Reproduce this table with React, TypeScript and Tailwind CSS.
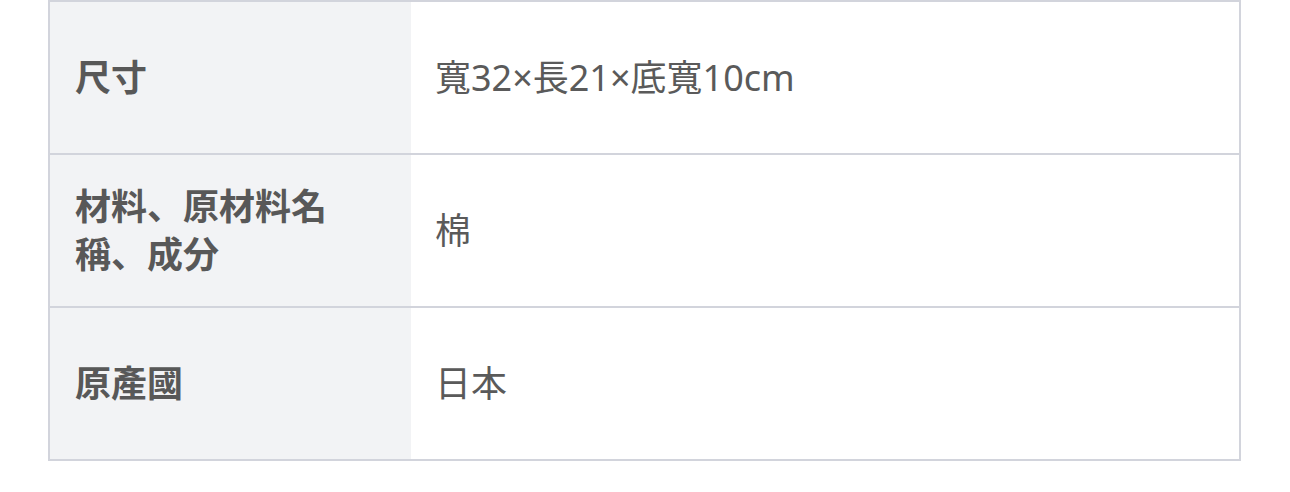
const rows = [
  { label: "尺寸", value: "寬32×長21×底寬10cm" },
  { label: "材料、原材料名稱、成分", value: "棉" },
  { label: "原產國", value: "日本" },
];

export default function App() {
  return (
    <div
      className="min-h-[492px] w-[1290px] bg-white"
      style={{ fontFamily: '"Noto Sans", "Noto Sans CJK JP", sans-serif' }}
    >
      <div className="ml-[48px] w-[1193px] border-2 border-[#d2d4dc]">
        {rows.map((row, i) => (
          <div
            key={row.label}
            className={
              "grid grid-cols-[361px_1fr] " +
              (i > 0 ? "border-t-2 border-[#d2d4dc]" : "")
            }
          >
            <div className="flex h-[151px] items-center bg-[#f2f3f5] pl-[25px] pr-[70px]">
              <span className="text-[36px] font-bold leading-[48px] text-[#585858]">
                {row.label}
              </span>
            </div>
            <div className="flex h-[151px] items-center px-[24px]">
              <span className="text-[36px] leading-[48px] text-[#5a5a5a]">
                {row.value}
              </span>
            </div>
          </div>
        ))}
      </div>
    </div>
  );
}
